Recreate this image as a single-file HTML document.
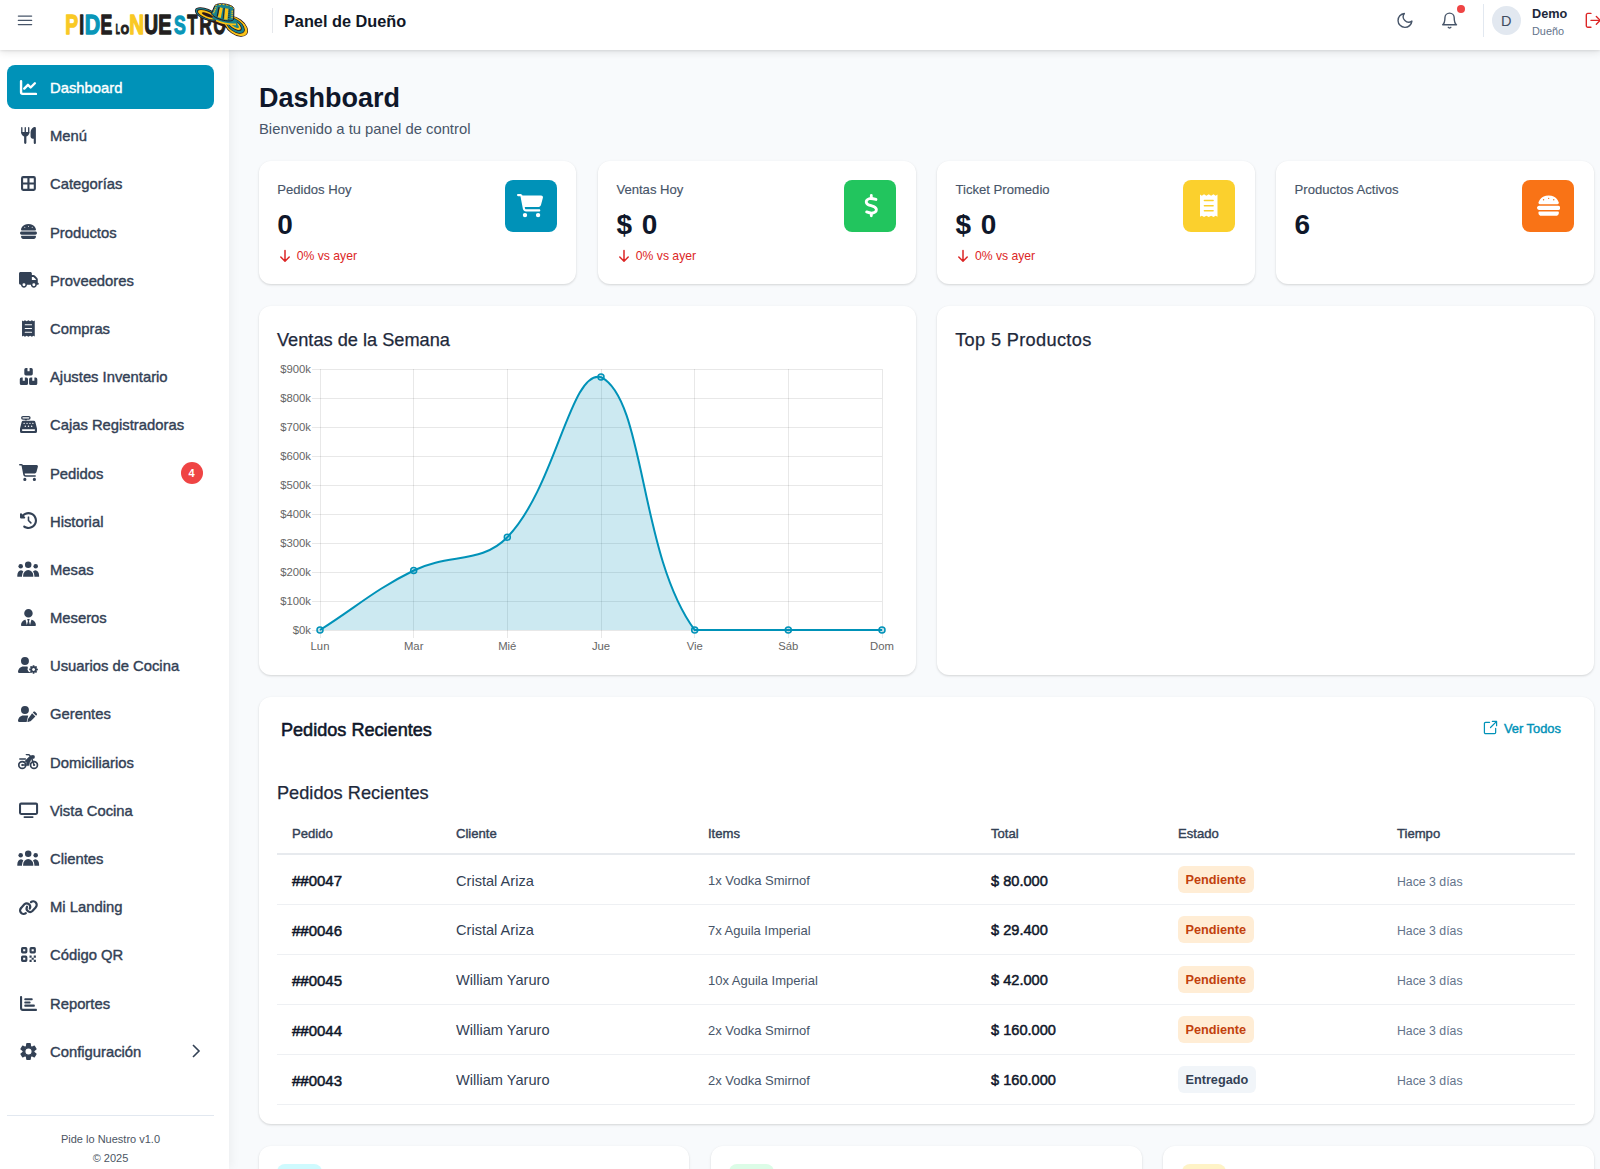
<!DOCTYPE html>
<html lang="es">
<head>
<meta charset="utf-8">
<title>Panel de Dueño - Pide lo Nuestro</title>
<style>
*{box-sizing:border-box;margin:0;padding:0}
html,body{width:1600px;height:1169px;overflow:hidden}
body{font-family:"Liberation Sans",sans-serif;background:#f8fafc;color:#1e293b;position:relative}
svg{display:block}
/* header */
.hdr{position:absolute;left:0;top:0;width:1600px;height:50px;background:#fff;box-shadow:0 1px 2px rgba(0,0,0,.08),0 2px 8px rgba(0,0,0,.11);z-index:10}
.hdr .burger{position:absolute;left:17px;top:14px}
.hdr .vdiv{position:absolute;left:271.6px;top:7.5px;width:1px;height:25.5px;background:#e5e7eb}
.hdr h1{position:absolute;left:284px;top:11.4px;font-size:16.3px;font-weight:700;color:#111827;line-height:20px;white-space:nowrap}
.hdr .hico{position:absolute;left:1380px;top:0}
.hdr .dot{position:absolute;left:1457px;top:5.3px;width:7.8px;height:7.8px;border-radius:50%;background:#ef4444}
.hdr .vdiv2{position:absolute;left:1483px;top:4px;width:1px;height:33px;background:#e2e8f0}
.hdr .avatar{position:absolute;left:1491.6px;top:5.5px;width:29.5px;height:29.5px;border-radius:50%;background:#e2e8f0;color:#3f4c61;font-size:14.5px;line-height:30px;text-align:center}
.hdr .uname{position:absolute;left:1532px;top:5.6px;font-size:12.7px;font-weight:700;color:#1e293b;line-height:16px}
.hdr .urole{position:absolute;left:1532px;top:23.5px;font-size:10.9px;color:#64748b;line-height:14px}
/* sidebar */
.side{position:absolute;left:0;top:50px;width:229px;height:1119px;background:#fff;box-shadow:2px 0 10px rgba(0,0,0,.055);z-index:5}
.nav{position:absolute;left:6.6px;top:15px;width:207.4px;list-style:none}
.nav li{height:44.2px;margin-bottom:4px;border-radius:8px;position:relative;font-size:14.8px;font-weight:400;-webkit-text-stroke:.4px currentColor;color:#334155;line-height:46.4px;padding-left:43.4px;white-space:nowrap}
.nav li.on{background:#0092b8;color:#fff}
.nav li svg{position:absolute;fill:currentColor;overflow:visible;margin-top:-.2px;margin-left:.3px}
.nav .badge{-webkit-text-stroke:0;position:absolute;left:174px;top:11px;width:22px;height:22px;border-radius:50%;background:#ef4444;color:#fff;font-size:11px;font-weight:700;line-height:22px;text-align:center;letter-spacing:0}
.nav .chev{position:absolute;left:183px;top:14px;width:12px;height:16px;fill:none;stroke:#334155;stroke-width:1.6}
.sfoot{position:absolute;left:7px;top:1065px;width:207px;border-top:1px solid #e2e8f0;text-align:center;font-size:11px;color:#4b5563;padding-top:13.9px;line-height:19px}
/* main */
.main{position:absolute;left:229px;top:50px;width:1371px;height:1119px}
.ptitle{position:absolute;left:30px;top:31px;font-size:27px;font-weight:700;color:#0f172a;line-height:34px}
.psub{position:absolute;left:30px;top:70px;font-size:14.8px;color:#475569;line-height:18px}
.card{position:absolute;background:#fff;border-radius:12px;box-shadow:0 1px 3px rgba(0,0,0,.10),0 1px 2px rgba(0,0,0,.06)}
.stat .lbl{position:absolute;left:18.6px;top:21.2px;font-size:13.1px;-webkit-text-stroke:.15px #475569;color:#475569;line-height:16px;font-weight:400}
.stat .val{position:absolute;left:18.6px;top:48px;font-size:28px;word-spacing:2px;font-weight:700;color:#0f172a;line-height:32px}
.stat .chg{position:absolute;left:20px;top:87.5px;font-size:12.2px;color:#dc2626;line-height:16px;padding-left:18px}
.stat .chg svg{position:absolute;left:0;top:1px}
.stat .ico{position:absolute;right:19.5px;top:19.5px;width:52px;height:52px;border-radius:8px}
.stat .ico svg{position:absolute;fill:#fff;color:#fff}
.ctitle{position:absolute;left:18.3px;top:22.3px;font-size:18.2px;font-weight:400;-webkit-text-stroke:.25px #1e293b;color:#1e293b;line-height:24px}

.ohead{position:absolute;left:22.3px;top:21.3px;font-size:18.1px;font-weight:400;-webkit-text-stroke:.55px #0f172a;color:#0f172a;line-height:24px}
.vtodos{position:absolute;right:32.8px;top:24.3px;font-size:12.9px;font-weight:400;-webkit-text-stroke:.4px #0092b8;color:#0092b8;line-height:16px;padding-left:21px}
.vtodos svg{position:absolute;left:0;top:-.5px}
.tbl{position:absolute;left:18.3px;top:115.7px;width:1298px;border-collapse:collapse;table-layout:fixed}
.tbl th{height:42px;text-align:left;padding:2px 0 0 15px;font-size:13.1px;font-weight:400;-webkit-text-stroke:.4px #334155;color:#334155;border-bottom:2px solid #e7eaee}
.tbl td{height:50px;padding:2px 0 0 15px;border-bottom:1px solid #eef0f3;font-size:13px;white-space:nowrap}
.tbl .id{font-size:15px;font-weight:400;-webkit-text-stroke:.5px #0f172a;color:#0f172a}
.tbl .cl{font-size:14.6px;color:#334155}
.tbl .it{font-size:13px;color:#475569}
.tbl .to{font-size:14.6px;font-weight:400;-webkit-text-stroke:.5px #0f172a;color:#0f172a}
.tbl .ti{font-size:12.3px;color:#64748b;padding-top:4px}
.tbl .sc{padding-top:0}
.st{display:inline-block;height:26.5px;line-height:28.5px;padding:0 7.5px;vertical-align:middle;border-radius:6px;font-size:12.7px;font-weight:700}
.st.pe{background:#ffedd5;color:#c2410c}
.st.en{background:#f1f5f9;color:#334155}
.qi{position:absolute;left:18.6px;top:18.3px;width:44.4px;height:44px;border-radius:8px}
</style>
</head>
<body>
<div class="hdr">
  <svg class="burger" width="20" height="14" viewBox="0 0 20 14" fill="none" stroke="#475569" stroke-width="1.35" stroke-linecap="round"><path d="M1.4 2.1h13.2M1.4 6.4h13.2M1.4 10.6h13.2"/></svg>
  <svg class="logo" style="position:absolute;left:60px;top:0" width="195" height="45" viewBox="60 0 195 45" font-family="'Liberation Sans',sans-serif" font-weight="700" stroke-linejoin="round">
<text transform="translate(65.26 34.35) scale(0.709 1)" font-size="27.18" fill="#f9c923" stroke="#f9c923" stroke-width="1.3">P</text>
<text transform="translate(79.19 34.35) scale(0.639 1)" font-size="27.18" fill="#231f20" stroke="#231f20" stroke-width="1.3">I</text>
<text transform="translate(84.82 34.35) scale(0.786 1)" font-size="27.18" fill="#0996b8" stroke="#0996b8" stroke-width="1.3">D</text>
<text transform="translate(100.47 34.35) scale(0.649 1)" font-size="27.18" fill="#231f20" stroke="#231f20" stroke-width="1.3">E</text>
<text transform="translate(115.81 33.65) scale(0.480 1)" font-size="13.81" fill="#231f20" stroke="#231f20" stroke-width="1.1">L</text>
<text transform="translate(120.81 33.52) scale(0.794 1)" font-size="13.42" fill="#231f20" stroke="#231f20" stroke-width="1.1">O</text>
<text transform="translate(129.27 34.35) scale(0.757 1)" font-size="27.18" fill="#f9c923" stroke="#f9c923" stroke-width="1.3">N</text>
<text transform="translate(144.20 34.09) scale(0.714 1)" font-size="26.80" fill="#231f20" stroke="#231f20" stroke-width="1.3">U</text>
<text transform="translate(158.31 34.35) scale(0.734 1)" font-size="27.18" fill="#231f20" stroke="#231f20" stroke-width="1.3">E</text>
<text transform="translate(173.89 34.09) scale(0.667 1)" font-size="26.41" fill="#0996b8" stroke="#0996b8" stroke-width="1.3">S</text>
<text transform="translate(187.36 34.35) scale(0.619 1)" font-size="27.18" fill="#231f20" stroke="#231f20" stroke-width="1.3">T</text>
<text transform="translate(199.50 34.35) scale(0.632 1)" font-size="27.18" fill="#231f20" stroke="#231f20" stroke-width="1.3">R</text>
<text transform="translate(213.41 34.09) scale(0.594 1)" font-size="26.41" fill="#231f20" stroke="#231f20" stroke-width="1.3">O</text>
<g>
<path d="M200 17.5L214 11L234 17L241 33L228 28.5Z" fill="#2b1719"/>
<g transform="rotate(36 236 26.3)">
<ellipse cx="236" cy="26.3" rx="13.6" ry="8.3" fill="#2b1719"/>
<ellipse cx="236" cy="26.3" rx="12.9" ry="7.6" fill="#fbc316"/>
<ellipse cx="235" cy="26.2" rx="11" ry="6.1" fill="#2b1719"/>
<ellipse cx="234.8" cy="26.2" rx="10.4" ry="5.5" fill="#17838f"/>
<ellipse cx="233.8" cy="26" rx="8.7" ry="4.1" fill="#2b1719"/>
<ellipse cx="233.5" cy="26" rx="8" ry="3.4" fill="#fbc316"/>
<ellipse cx="232.6" cy="25.8" rx="6.4" ry="2.1" fill="#17838f"/>
</g>
<g transform="rotate(22 206.5 14.3)">
<ellipse cx="206.5" cy="14.3" rx="12.3" ry="5.6" fill="#2b1719"/>
<ellipse cx="206.5" cy="14.3" rx="11.6" ry="4.9" fill="#17838f"/>
<ellipse cx="206.9" cy="14.4" rx="10.5" ry="4" fill="#2b1719"/>
<ellipse cx="207.1" cy="14.5" rx="9.7" ry="3.3" fill="#fbc316"/>
<ellipse cx="207.8" cy="14.6" rx="6.2" ry="1.6" fill="#2b1719"/>
</g>
<path d="M212 18.5L222 22.5C227 24.5 233 25 238 24.5L236 20L224 19L214 15.5Z" fill="#17838f"/>
<path d="M216 20.6C221 22.9 228 24.7 236 24.3" fill="none" stroke="#fbc316" stroke-width="1.7"/>
<path d="M211.4 13.4L214.8 5.6C216.5 3.6 222 3.3 227 4.4C231 5.3 234 7 233.9 8.8L233.7 19C233.5 21 229 21.6 223.5 20.3C217.5 18.8 212.4 16.2 211.4 13.4Z" fill="#17838f" stroke="#2b1719" stroke-width="1"/>
<path d="M215.5 5.6C218 4.2 223 4.2 227.5 5.2C231 6 233.3 7.3 233.5 8.7" fill="none" stroke="#fbc316" stroke-width="1" stroke-dasharray="2 1.6"/>
<path d="M216.1 7.2L213.4 13.6" stroke="#fbc316" stroke-width="1.4" stroke-dasharray="1.2 .6" fill="none"/>
<path d="M221.3 7.6L219.3 17.6" stroke="#fbc316" stroke-width="3" fill="none"/>
<path d="M219.1 7.1L217.2 16.5" stroke="#2b1719" stroke-width="1.1" fill="none"/>
<path d="M226.8 8.5L225.8 19.6" stroke="#fbc316" stroke-width="3.4" fill="none"/>
<path d="M224.2 7.9L223.2 18.8" stroke="#2b1719" stroke-width=".9" fill="none"/>
<path d="M229.3 9.5L228.7 19.5" stroke="#2b1719" stroke-width="1.1" stroke-dasharray="1 .9" fill="none"/>
<path d="M232.2 10.5L232 19" stroke="#fbc316" stroke-width="1.3" stroke-dasharray="1.4 .7" fill="none"/>
</g>
</svg>
  <div class="vdiv"></div>
  <h1>Panel de Dueño</h1>
  <svg class="hico" width="220" height="50" viewBox="1380 0 220 50" fill="none" stroke="#475569" stroke-width="1.8" stroke-linecap="round" stroke-linejoin="round">
    <g transform="translate(1395.7 11.2) scale(.772)"><path d="M21 12.790A9 9 0 1 1 11.21 3 7 7 0 0 0 21 12.790z"/></g>
    <g transform="translate(1440.3 11.6) scale(.772)"><path d="M18 8A6 6 0 0 0 6 8c0 7-3 9-3 9h18s-3-2-3-9"/><path d="M13.73 20.3a2 2 0 0 1-3.46 0"/></g>
    <g transform="translate(1584 11.1) scale(.772)" stroke="#dc2626"><path d="M9 21H5a2 2 0 0 1-2-2V5a2 2 0 0 1 2-2h4"/><path d="M16 17l5-5-5-5"/><path d="M21 12H9"/></g>
  </svg>
  <div class="dot"></div>
  <div class="vdiv2"></div>
  <div class="avatar">D</div>
  <div class="uname">Demo</div>
  <div class="urole">Dueño</div>
  </div>
<div class="side">
  <ul class="nav">
    <li class="on"><svg viewBox="0 0 512 512" style="left:13.0px;top:13.8px;width:17.0px;height:17.0px"><path d="M32 64V400a48 48 0 0 0 48 48H480" fill="none" stroke="currentColor" stroke-width="72" stroke-linecap="round"/><path d="M128 288L240 176l80 80L448 128" fill="none" stroke="currentColor" stroke-width="72" stroke-linecap="round" stroke-linejoin="round"/></svg>Dashboard</li>
    <li><svg viewBox="0 0 448 512" style="left:14.1px;top:13.8px;width:14.9px;height:17.0px"><path d="M24 20V170M128 20V170M232 20V170" stroke="currentColor" stroke-width="40" stroke-linecap="round" fill="none"/><path d="M4 150H252C256 232 204 272 162 284V478a34 34 0 0 1-68 0V284C52 272 0 232 4 150Z"/><path d="M416 0C352 0 288 78 288 176V288c0 35 29 64 64 64h32V480a32 32 0 0 0 64 0V32a32 32 0 0 0-32-32Z"/></svg>Menú</li>
    <li><svg viewBox="0 0 448 512" style="left:14.1px;top:13.8px;width:14.9px;height:17.0px"><path fill-rule="evenodd" d="M64 32H384a64 64 0 0 1 64 64V416a64 64 0 0 1-64 64H64a64 64 0 0 1-64-64V96a64 64 0 0 1 64-64ZM64 96v128h128V96ZM256 96v128h128V96ZM64 288v128h128V288ZM256 288v128h128V288Z"/></svg>Categorías</li>
    <li><svg viewBox="0 0 512 512" style="left:13.0px;top:13.8px;width:17.0px;height:17.0px"><path fill-rule="evenodd" d="M61.1 224C45 224 32 211 32 194.900c0-1.9 .2-3.7 .6-5.600C37.9 168.3 78.8 32 256 32s218.1 136.3 223.4 157.300c.5 1.9 .6 3.7 .6 5.600c0 16.1-13 29.1-29.1 29.100H61.100ZM144 112a16 16 0 1 0 0 32a16 16 0 1 0 0-32ZM256 80a16 16 0 1 0 0 32a16 16 0 1 0 0-32ZM368 112a16 16 0 1 0 0 32a16 16 0 1 0 0-32ZM0 304c0-26.5 21.5-48 48-48H464c26.5 0 48 21.5 48 48s-21.5 48-48 48H48c-26.5 0-48-21.5-48-48ZM32 416V400c0-8.8 7.2-16 16-16H464c8.8 0 16 7.2 16 16v16c0 35.3-28.7 64-64 64H96c-35.3 0-64-28.7-64-64Z"/></svg>Productos</li>
    <li><svg viewBox="0 0 640 512" style="left:11.9px;top:14.1px;width:19.8px;height:15.8px"><path fill-rule="evenodd" d="M48 0C21.5 0 0 21.5 0 48V368c0 26.5 21.5 48 48 48H64c0 53 43 96 96 96s96-43 96-96H384c0 53 43 96 96 96s96-43 96-96h32c17.7 0 32-14.3 32-32s-14.3-32-32-32V237.300c0-17-6.7-33.3-18.7-45.300L512 114.700c-12-12-28.3-18.7-45.3-18.700H416V48c0-26.5-21.5-48-48-48H48ZM416 160h50.700L544 237.300V256H416V160ZM112 416a48 48 0 1 1 96 0 48 48 0 1 1-96 0Zm368-48a48 48 0 1 1 0 96 48 48 0 1 1 0-96Z"/></svg>Proveedores</li>
    <li><svg viewBox="0 0 384 512" style="left:15.1px;top:13.8px;width:12.8px;height:17.0px"><path fill-rule="evenodd" d="M0 12L40 36 88 4l52 32L192 4l52 32L296 4l48 32 40-24V500l-40-24-48 32-52-32-52 32-52-32-52 32-48-32-40 24ZM96 128a16 16 0 0 0 0 32H288a16 16 0 0 0 0-32ZM96 240a16 16 0 0 0 0 32H288a16 16 0 0 0 0-32ZM96 352a16 16 0 0 0 0 32H288a16 16 0 0 0 0-32Z"/></svg>Compras</li>
    <li><svg viewBox="0 0 576 512" style="left:11.9px;top:13.8px;width:19.1px;height:17.0px"><path fill-rule="evenodd" d="M208 0h48v96h64V0h48a48 48 0 0 1 48 48V176a48 48 0 0 1-48 48H208a48 48 0 0 1-48-48V48a48 48 0 0 1 48-48ZM72 288h40v96h64V288h48a48 48 0 0 1 48 48V464a48 48 0 0 1-48 48H72A48 48 0 0 1 24 464V336a48 48 0 0 1 48-48ZM352 288h48v96h64V288h40a48 48 0 0 1 48 48V464a48 48 0 0 1-48 48H352a48 48 0 0 1-48-48V336a48 48 0 0 1 48-48Z"/></svg>Ajustes Inventario</li>
    <li><svg viewBox="0 0 512 512" style="left:13.0px;top:13.8px;width:17.0px;height:17.0px"><path fill-rule="evenodd" d="M88 0H264a56 56 0 0 1 0 112H208v16H144V112H88A56 56 0 0 1 88 0ZM88 40a16 16 0 0 0 0 32H264a16 16 0 0 0 0-32ZM96 144H416a48 48 0 0 1 46 36l46 180c3 10 4 20 4 30V464a48 48 0 0 1-48 48H48A48 48 0 0 1 0 464V390c0-10 1-20 4-30L50 180a48 48 0 0 1 46-36ZM124 200a22 22 0 1 0 0 44a22 22 0 1 0 0-44ZM212 200a22 22 0 1 0 0 44a22 22 0 1 0 0-44ZM300 200a22 22 0 1 0 0 44a22 22 0 1 0 0-44ZM388 200a22 22 0 1 0 0 44a22 22 0 1 0 0-44ZM160 284a22 22 0 1 0 0 44a22 22 0 1 0 0-44ZM256 284a22 22 0 1 0 0 44a22 22 0 1 0 0-44ZM352 284a22 22 0 1 0 0 44a22 22 0 1 0 0-44ZM80 400a24 24 0 0 0 0 48H432a24 24 0 0 0 0-48Z"/></svg>Cajas Registradoras</li>
    <li><svg viewBox="0 0 576 512" style="left:11.9px;top:13.8px;width:19.1px;height:17.0px"><path d="M0 24C0 10.7 10.7 0 24 0H69.500c22 0 41.5 12.8 50.6 32h411c26.3 0 45.5 25 38.6 50.400l-41 152.300c-8.5 31.4-37 53.3-69.5 53.300H170.700l5.4 28.500c2.2 11.3 12.1 19.5 23.6 19.500H488c13.3 0 24 10.7 24 24s-10.7 24-24 24H199.700c-34.6 0-64.3-24.6-70.7-58.500L77.4 54.500c-.7-3.8-4-6.5-7.9-6.500H24C10.7 48 0 37.3 0 24ZM128 464a48 48 0 1 1 96 0 48 48 0 1 1-96 0Zm336-48a48 48 0 1 1 0 96 48 48 0 1 1 0-96Z"/></svg>Pedidos<span class="badge">4</span></li>
    <li><svg viewBox="0 0 512 512" style="left:13.0px;top:13.8px;width:17.0px;height:17.0px"><path d="M75 75L41 41C25.9 25.9 0 36.6 0 57.900V168c0 13.3 10.7 24 24 24H134.100c21.4 0 32.1-25.9 17-41l-30.8-30.800C155 85.5 203 64 256 64c106 0 192 86 192 192s-86 192-192 192c-40.8 0-78.6-12.7-109.7-34.400c-14.5-10.1-34.4-6.6-44.6 7.900s-6.6 34.4 7.9 44.600C151.2 495 201.7 512 256 512c141.4 0 256-114.6 256-256S397.4 0 256 0C185.3 0 121.3 28.7 75 75Zm181 53c-13.3 0-24 10.7-24 24V256c0 6.4 2.5 12.5 7 17l72 72c9.4 9.4 24.6 9.4 33.9 0s9.4-24.6 0-33.900l-65-65V152c0-13.3-10.7-24-24-24Z"/></svg>Historial</li>
    <li><svg viewBox="0 0 48 44" style="left:1.1px;top:1.2px;width:48px;height:44px"><circle cx="12.7" cy="18.3" r="2.25"/><circle cx="27.7" cy="18.3" r="2.25"/><path d="M9.3 28.7V27.6A3.7 5.4 0 0 1 16.7 27.6V28.7ZM23.7 28.7V27.6A3.7 5.4 0 0 1 31.1 27.6V28.7Z"/><path d="M15.1 28.7V27.8A5.1 5.7 0 0 1 25.3 27.8V28.7Z" stroke="#fff" stroke-width="2.2" paint-order="stroke"/><path d="M9.9 28.7H30.5" stroke="currentColor" stroke-width=".01"/><circle cx="20.2" cy="16.8" r="3.25"/></svg>Mesas</li>
    <li><svg viewBox="0 0 448 512" style="left:14.1px;top:13.8px;width:14.9px;height:17.0px"><path d="M96 128a128 128 0 1 0 256 0A128 128 0 1 0 96 128Zm94.5 200.200l18.6 31L175.8 483.100l-36-146.900c-2-8.1-9.8-13.4-17.9-11.300C51.9 342.4 0 405.8 0 481.300c0 17 13.8 30.7 30.7 30.700H417.300c17 0 30.7-13.8 30.7-30.700c0-75.5-51.9-138.9-121.9-156.400c-8.1-2-15.9 3.3-17.9 11.300l-36 146.900L238.9 359.200l18.6-31c6.4-10.7-1.3-24.2-13.7-24.200H204.300c-12.4 0-20.1 13.6-13.7 24.200Z"/></svg>Meseros</li>
    <li><svg viewBox="0 0 640 512" style="left:11.5px;top:14.3px;width:19.9px;height:15.9px"><path d="M224 0a128 128 0 1 1 0 256A128 128 0 1 1 224 0ZM178.3 304h91.400c11.8 0 23.4 1.2 34.5 3.300c-2.1 18.5 7.4 35.6 21.8 44.800c-16.6 10.6-26.7 31.6-20 53.300c4 12.9 9.4 25.5 16.4 37.600s15.2 23.1 24.4 33c15.7 16.9 39.6 18.4 57.2 8.700v.9c0 9.2 2.7 18.5 7.9 26.300H29.700C13.3 512 0 498.7 0 482.300C0 383.8 79.8 304 178.3 304Z"/><g transform="translate(362 262) scale(.181 -.181) translate(0 -1408)"><path d="M1024 640q0 106 -75 181t-181 75t-181 -75t-75 -181t75 -181t181 -75t181 75t75 181zM1536 749v-222q0 -12 -8 -23t-20 -13l-185 -28q-19 -54 -39 -91q35 -50 107 -138q10 -12 10 -25t-9 -23q-27 -37 -99 -108t-94 -71q-12 0 -26 9l-138 108q-44 -23 -91 -38 q-16 -136 -29 -186q-7 -28 -36 -28h-222q-14 0 -24.5 8.5t-11.5 21.5l-28 184q-49 16 -90 37l-141 -107q-10 -9 -25 -9q-14 0 -25 11q-126 114 -165 168q-7 10 -7 23q0 12 8 23q15 21 51 66.5t54 70.5q-27 50 -41 99l-183 27q-13 2 -21 12.5t-8 23.5v222q0 12 8 23t19 13 l186 28q14 46 39 92q-40 57 -107 138q-10 12 -10 24q0 10 9 23q26 36 98.5 107.5t94.5 71.5q13 0 26 -10l138 -107q44 23 91 38q16 136 29 186q7 28 36 28h222q14 0 24.5 -8.5t11.5 -21.5l28 -184q49 -16 90 -37l142 107q9 9 24 9q13 0 25 -10q129 -119 165 -170q7 -8 7 -22 q0 -12 -8 -23q-15 -21 -51 -66.5t-54 -70.5q26 -50 41 -98l183 -28q13 -2 21 -12.5t8 -23.5z"/></g></svg>Usuarios de Cocina</li>
    <li><svg viewBox="0 0 640 512" style="left:11.5px;top:14.3px;width:19.9px;height:15.9px"><path d="M224 0a128 128 0 1 1 0 256A128 128 0 1 1 224 0ZM178.3 304h91.400c20.6 0 40.4 3.5 58.8 9.900L300 420l-22 92H29.700C13.3 512 0 498.7 0 482.300C0 383.8 79.8 304 178.3 304Z"/><path d="M549 236l55 55c14 14 14 36 0 50l-22 22-105-105 22-22c14-14 36-14 50 0ZM454 281L559 386 414 531c-6 6-13 10-21 12l-70 17c-12 3-22-7-19-19l17-70c2-8 6-15 12-21Z" transform="translate(0 -48)"/></svg>Gerentes</li>
    <li><svg viewBox="0 0 48 44" style="left:1.1px;top:.4px;width:48px;height:44px;fill:none" stroke="currentColor" stroke-linecap="round" stroke-linejoin="round"><circle cx="14.25" cy="25" r="3.45" stroke-width="1.7"/><circle cx="26" cy="25" r="3.45" stroke-width="1.7"/><path d="M11.8 19H17.4" stroke-width="1.5"/><path d="M18.3 14.6L21 14.8 22.8 16.5" stroke-width="1.4"/><path d="M23.3 17L26 25" stroke-width="1.5"/><path d="M14.250 25H17" stroke-width="1.3"/><g fill="currentColor" stroke-width=".6"><circle cx="14.25" cy="25" r=".7"/><circle cx="26" cy="25" r=".7"/><path d="M16.8 21.3L21.8 16.3 24.2 17.1 21.7 22.3 20.7 25.6H18.2L18.8 22.5Z"/><rect x="23.3" y="15.5" width="3.1" height="2.9" rx=".7"/></g></svg>Domiciliarios</li>
    <li><svg viewBox="0 0 576 512" style="left:11.9px;top:13.8px;width:19.1px;height:17.0px"><path fill-rule="evenodd" d="M64 48H512a64 64 0 0 1 64 64V356a64 64 0 0 1-64 64H64A64 64 0 0 1 0 356V112A64 64 0 0 1 64 48ZM62 110V358H514V110ZM164 456H412a28 28 0 0 1 0 56H164a28 28 0 0 1 0-56Z"/></svg>Vista Cocina</li>
    <li><svg viewBox="0 0 48 44" style="left:1.1px;top:1.2px;width:48px;height:44px"><circle cx="12.7" cy="18.3" r="2.25"/><circle cx="27.7" cy="18.3" r="2.25"/><path d="M9.3 28.7V27.6A3.7 5.4 0 0 1 16.7 27.6V28.7ZM23.7 28.7V27.6A3.7 5.4 0 0 1 31.1 27.6V28.7Z"/><path d="M15.1 28.7V27.8A5.1 5.7 0 0 1 25.3 27.8V28.7Z" stroke="#fff" stroke-width="2.2" paint-order="stroke"/><path d="M9.9 28.7H30.5" stroke="currentColor" stroke-width=".01"/><circle cx="20.2" cy="16.8" r="3.25"/></svg>Clientes</li>
    <li><svg viewBox="0 0 40 30" style="left:5.1px;top:6.7px;width:40px;height:30px;fill:none" fill="none" stroke="currentColor" stroke-width="2.2" stroke-linecap="round"><path d="M13.84 22.10A3.5 3.5 0 0 1 9.16 16.90L12.36 13.30A3.5 3.5 0 0 1 17.79 17.54"/><path d="M13.84 22.10A3.5 3.5 0 0 1 9.16 16.90L12.36 13.30A3.5 3.5 0 0 1 17.79 17.54" transform="rotate(180 16.40 16.65)"/></svg>Mi Landing</li>
    <li><svg viewBox="0 0 448 512" style="left:14.1px;top:13.8px;width:14.9px;height:17.0px"><path fill-rule="evenodd" d="M48 32H144a48 48 0 0 1 48 48V176a48 48 0 0 1-48 48H48A48 48 0 0 1 0 176V80A48 48 0 0 1 48 32ZM64 96v64h64V96ZM304 32H400a48 48 0 0 1 48 48V176a48 48 0 0 1-48 48H304a48 48 0 0 1-48-48V80a48 48 0 0 1 48-48Zm16 64v64h64V96ZM48 288H144a48 48 0 0 1 48 48V432a48 48 0 0 1-48 48H48A48 48 0 0 1 0 432V336a48 48 0 0 1 48-48Zm16 64v64h64V352ZM256 288h64v64H256ZM384 288h64v64H384ZM320 352h64v64H320ZM256 416h64v64H256ZM384 416h64v64H384Z"/></svg>Código QR</li>
    <li><svg viewBox="0 0 512 512" style="left:13.0px;top:14.8px;width:17.0px;height:17.0px"><path d="M32 32c17.7 0 32 14.3 32 32V400c0 8.8 7.2 16 16 16H480c17.7 0 32 14.3 32 32s-14.3 32-32 32H80c-44.2 0-80-35.8-80-80V64C0 46.3 14.3 32 32 32Zm96 96c0-17.7 14.3-32 32-32H352c17.7 0 32 14.3 32 32s-14.3 32-32 32H160c-17.7 0-32-14.3-32-32Zm32 64H288c17.7 0 32 14.3 32 32s-14.3 32-32 32H160c-17.7 0-32-14.3-32-32s14.3-32 32-32Zm0 96H416c17.7 0 32 14.3 32 32s-14.3 32-32 32H160c-17.7 0-32-14.3-32-32s14.3-32 32-32Z"/></svg>Reportes</li>
    <li><svg viewBox="0 0 512 512" style="left:13.0px;top:14.5px;width:17.0px;height:17.0px"><path fill-rule="evenodd" stroke="currentColor" stroke-width="40" stroke-linejoin="round" d="M195 106L207 23L305 23L317 106L356 128L433 97L482 182L416 233L416 279L482 330L433 415L356 384L317 406L305 489L207 489L195 406L156 384L79 415L30 330L96 279L96 233L30 182L79 97L156 128ZM256 144a112 112 0 1 0 0 224a112 112 0 1 0 0-224Z"/></svg>Configuración<svg class="chev" viewBox="0 0 12 16"><path d="M3 2l6 6-6 6"/></svg></li>
  </ul>
  <div class="sfoot">Pide lo Nuestro v1.0<br>© 2025</div>
</div>
<div class="main">
  <div class="ptitle">Dashboard</div>
  <div class="psub">Bienvenido a tu panel de control</div>

  <div class="card stat" style="left:29.7px;top:110.5px;width:317.8px;height:123.9px">
    <div class="lbl">Pedidos Hoy</div><div class="val">0</div>
    <div class="chg"><svg width="12" height="14" viewBox="0 0 12 14" fill="none" stroke="#dc2626" stroke-width="1.5" stroke-linecap="round" stroke-linejoin="round"><path d="M6 1.5v10.5M1.8 8l4.2 4.2L10.2 8"/></svg>0% vs ayer</div>
    <div class="ico" style="background:#0092b8"><svg viewBox="0 0 576 512" style="margin-left:-0.7px;left:12.9px;top:14.3px;width:26.2px;height:23.3px"><path d="M0 24C0 10.7 10.7 0 24 0H69.500c22 0 41.5 12.8 50.6 32h411c26.3 0 45.5 25 38.6 50.400l-41 152.300c-8.5 31.4-37 53.3-69.5 53.300H170.700l5.4 28.500c2.2 11.3 12.1 19.5 23.6 19.500H488c13.3 0 24 10.7 24 24s-10.7 24-24 24H199.700c-34.6 0-64.3-24.6-70.7-58.500L77.4 54.500c-.7-3.8-4-6.5-7.9-6.500H24C10.7 48 0 37.3 0 24ZM128 464a48 48 0 1 1 96 0 48 48 0 1 1-96 0Zm336-48a48 48 0 1 1 0 96 48 48 0 1 1 0-96Z"/></svg></div>
  </div>
  <div class="card stat" style="left:368.8px;top:110.5px;width:317.8px;height:123.9px">
    <div class="lbl">Ventas Hoy</div><div class="val">$ 0</div>
    <div class="chg"><svg width="12" height="14" viewBox="0 0 12 14" fill="none" stroke="#dc2626" stroke-width="1.5" stroke-linecap="round" stroke-linejoin="round"><path d="M6 1.5v10.5M1.8 8l4.2 4.2L10.2 8"/></svg>0% vs ayer</div>
    <div class="ico" style="background:#22c55e"><svg viewBox="0 0 320 512" style="margin-left:.8px;left:18.7px;top:14.3px;width:14.6px;height:23.3px"><g fill="none" stroke="#fff" stroke-width="62" stroke-linecap="round"><path d="M262 120C200 100 150 92 110 104C60 118 38 160 56 200C72 236 120 246 170 260C220 274 262 292 270 332C278 380 240 412 190 418C140 424 100 410 58 394"/><path d="M160 32V92M160 424V480"/></g></svg></div>
  </div>
  <div class="card stat" style="left:707.9px;top:110.5px;width:317.8px;height:123.9px">
    <div class="lbl">Ticket Promedio</div><div class="val">$ 0</div>
    <div class="chg"><svg width="12" height="14" viewBox="0 0 12 14" fill="none" stroke="#dc2626" stroke-width="1.5" stroke-linecap="round" stroke-linejoin="round"><path d="M6 1.5v10.5M1.8 8l4.2 4.2L10.2 8"/></svg>0% vs ayer</div>
    <div class="ico" style="background:#fbd02d"><svg viewBox="0 0 384 512" style="left:17.3px;top:14.3px;width:17.5px;height:23.3px"><path fill-rule="evenodd" d="M0 12L40 36 88 4l52 32L192 4l52 32L296 4l48 32 40-24V500l-40-24-48 32-52-32-52 32-52-32-52 32-48-32-40 24ZM96 128a16 16 0 0 0 0 32H288a16 16 0 0 0 0-32ZM96 240a16 16 0 0 0 0 32H288a16 16 0 0 0 0-32ZM96 352a16 16 0 0 0 0 32H288a16 16 0 0 0 0-32Z"/></svg></div>
  </div>
  <div class="card stat" style="left:1047px;top:110.5px;width:317.8px;height:123.9px">
    <div class="lbl">Productos Activos</div><div class="val">6</div>
    <div class="ico" style="background:#f97316"><svg viewBox="0 0 512 512" style="left:14.3px;top:14.3px;width:23.3px;height:23.3px"><path fill-rule="evenodd" d="M61.1 224C45 224 32 211 32 194.900c0-1.9 .2-3.7 .6-5.600C37.9 168.3 78.8 32 256 32s218.1 136.3 223.4 157.300c.5 1.9 .6 3.7 .6 5.600c0 16.1-13 29.1-29.1 29.100H61.100ZM144 112a16 16 0 1 0 0 32a16 16 0 1 0 0-32ZM256 80a16 16 0 1 0 0 32a16 16 0 1 0 0-32ZM368 112a16 16 0 1 0 0 32a16 16 0 1 0 0-32ZM0 304c0-26.5 21.5-48 48-48H464c26.5 0 48 21.5 48 48s-21.5 48-48 48H48c-26.5 0-48-21.5-48-48ZM32 416V400c0-8.8 7.2-16 16-16H464c8.8 0 16 7.2 16 16v16c0 35.3-28.7 64-64 64H96c-35.3 0-64-28.7-64-64Z"/></svg></div>
  </div>

  <div class="card" style="left:29.7px;top:255.7px;width:656.9px;height:369.4px">
    <div class="ctitle">Ventas de la Semana</div>
    <svg class="chart" style="position:absolute;left:.3px;top:1.3px" width="655.5" height="367" viewBox="259 307 655.5 367" font-family="'Liberation Sans',sans-serif" font-size="11.3" fill="#666">
<path d="M320.5 369 V638 M413.5 369 V638 M507.5 369 V638 M601.5 369 V638 M694.5 369 V638 M788.5 369 V638 M882.5 369 V638 M312 630.5 H882 M312 601.5 H882 M312 572.5 H882 M312 543.5 H882 M312 514.5 H882 M312 485.5 H882 M312 456.5 H882 M312 427.5 H882 M312 398.5 H882 M312 369.5 H882" stroke="rgba(0,0,0,.09)" stroke-width="1" fill="none"/>
<path d="M320.0 630.0 C357.5 606.2 374.1 590.1 413.7 570.5 C449.1 553.0 481.2 564.2 507.3 537.2 C556.1 486.8 570.5 369.0 601.0 377.1 C645.4 399.1 639.1 554.9 694.7 630.0 C714.0 630.0 750.9 630.0 788.3 630.0 C825.8 630.0 844.5 630.0 882.0 630.0 L882 630 L320 630 Z" fill="rgba(0,146,184,.2)" stroke="none"/>
<path d="M320.0 630.0 C357.5 606.2 374.1 590.1 413.7 570.5 C449.1 553.0 481.2 564.2 507.3 537.2 C556.1 486.8 570.5 369.0 601.0 377.1 C645.4 399.1 639.1 554.9 694.7 630.0 C714.0 630.0 750.9 630.0 788.3 630.0 C825.8 630.0 844.5 630.0 882.0 630.0" fill="none" stroke="#0092b8" stroke-width="2"/>
<circle cx="320.0" cy="630.0" r="3" fill="rgba(0,146,184,.2)" stroke="#0092b8" stroke-width="1.5"/>
<circle cx="413.7" cy="570.5" r="3" fill="rgba(0,146,184,.2)" stroke="#0092b8" stroke-width="1.5"/>
<circle cx="507.3" cy="537.2" r="3" fill="rgba(0,146,184,.2)" stroke="#0092b8" stroke-width="1.5"/>
<circle cx="601.0" cy="377.1" r="3" fill="rgba(0,146,184,.2)" stroke="#0092b8" stroke-width="1.5"/>
<circle cx="694.7" cy="630.0" r="3" fill="rgba(0,146,184,.2)" stroke="#0092b8" stroke-width="1.5"/>
<circle cx="788.3" cy="630.0" r="3" fill="rgba(0,146,184,.2)" stroke="#0092b8" stroke-width="1.5"/>
<circle cx="882.0" cy="630.0" r="3" fill="rgba(0,146,184,.2)" stroke="#0092b8" stroke-width="1.5"/>
<g text-anchor="end">
<text x="311" y="634.3">$0k</text>
<text x="311" y="605.3">$100k</text>
<text x="311" y="576.3">$200k</text>
<text x="311" y="547.3">$300k</text>
<text x="311" y="518.3">$400k</text>
<text x="311" y="489.3">$500k</text>
<text x="311" y="460.3">$600k</text>
<text x="311" y="431.3">$700k</text>
<text x="311" y="402.3">$800k</text>
<text x="311" y="373.3">$900k</text>
</g><g text-anchor="middle">
<text x="320.0" y="650">Lun</text>
<text x="413.7" y="650">Mar</text>
<text x="507.3" y="650">Mié</text>
<text x="601.0" y="650">Jue</text>
<text x="694.7" y="650">Vie</text>
<text x="788.3" y="650">Sáb</text>
<text x="882.0" y="650">Dom</text>
</g></svg>
  </div>
  <div class="card" style="left:707.9px;top:255.7px;width:656.9px;height:369.4px">
    <div class="ctitle" style="letter-spacing:.33px">Top 5 Productos</div>
  </div>

  <div class="card" style="left:29.7px;top:646.7px;width:1335.1px;height:427.1px">
    <div class="ohead">Pedidos Recientes</div>
    <div class="vtodos"><svg width="15" height="15" viewBox="0 0 16 16" fill="none" stroke="#0092b8" stroke-width="1.3" stroke-linecap="round" stroke-linejoin="round"><path d="M13.5 9v4.2a1.3 1.3 0 0 1-1.3 1.3H2.800a1.3 1.3 0 0 1-1.3-1.3V3.800a1.3 1.3 0 0 1 1.3-1.3H7"/><path d="M10 1.5h4.500V6M14.3 1.700L8 8"/></svg>Ver Todos</div>
    <div class="ctitle" style="top:84.3px">Pedidos Recientes</div>
    <table class="tbl">
      <thead><tr><th style="width:164px">Pedido</th><th style="width:252px">Cliente</th><th style="width:283px">Items</th><th style="width:187px">Total</th><th style="width:219px">Estado</th><th>Tiempo</th></tr></thead>
      <tbody>
        <tr><td class="id">##0047</td><td class="cl">Cristal Ariza</td><td class="it">1x Vodka Smirnof</td><td class="to">$ 80.000</td><td class="sc"><span class="st pe">Pendiente</span></td><td class="ti">Hace 3 días</td></tr>
        <tr><td class="id">##0046</td><td class="cl">Cristal Ariza</td><td class="it">7x Aguila Imperial</td><td class="to">$ 29.400</td><td class="sc"><span class="st pe">Pendiente</span></td><td class="ti">Hace 3 días</td></tr>
        <tr><td class="id">##0045</td><td class="cl">William Yaruro</td><td class="it">10x Aguila Imperial</td><td class="to">$ 42.000</td><td class="sc"><span class="st pe">Pendiente</span></td><td class="ti">Hace 3 días</td></tr>
        <tr><td class="id">##0044</td><td class="cl">William Yaruro</td><td class="it">2x Vodka Smirnof</td><td class="to">$ 160.000</td><td class="sc"><span class="st pe">Pendiente</span></td><td class="ti">Hace 3 días</td></tr>
        <tr><td class="id">##0043</td><td class="cl">William Yaruro</td><td class="it">2x Vodka Smirnof</td><td class="to">$ 160.000</td><td class="sc"><span class="st en">Entregado</span></td><td class="ti">Hace 3 días</td></tr>
      </tbody>
    </table>
  </div>

  <div class="card" style="left:29.7px;top:1095.7px;width:430.8px;height:120px"><div class="qi" style="background:#cffafe"></div></div>
  <div class="card" style="left:481.8px;top:1095.7px;width:430.9px;height:120px"><div class="qi" style="background:#dcfce7"></div></div>
  <div class="card" style="left:934px;top:1095.7px;width:430.8px;height:120px"><div class="qi" style="background:#fef3c7"></div></div>

</div>
</body>
</html>
